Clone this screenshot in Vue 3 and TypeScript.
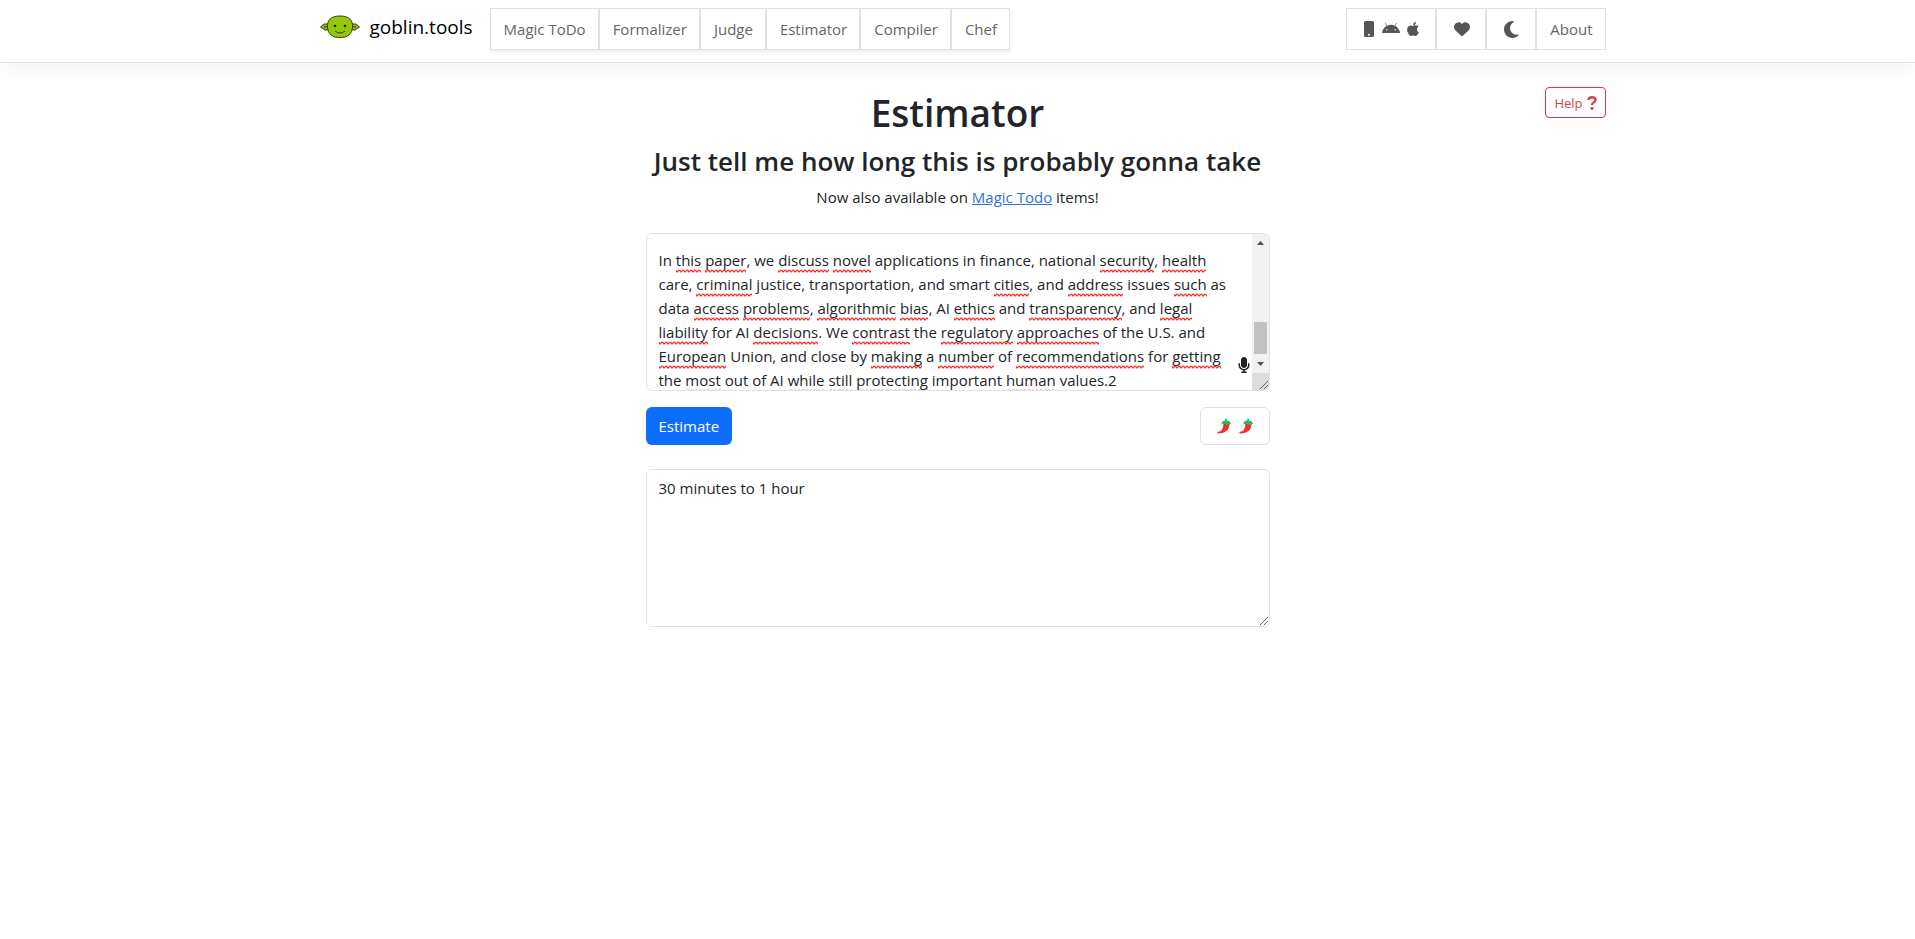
<script setup lang="ts">
import { ref } from 'vue'

type Piece = { text: string; flagged: boolean }

const tools = ['Magic ToDo', 'Formalizer', 'Judge', 'Estimator', 'Compiler', 'Chef']

// Words between asterisks are flagged by the spelling checker.
const marked = [
  'In *this* *paper*, we *discuss* *novel* applications in finance, national *security*, *health*',
  'care, *criminal* justice, transportation, and smart *cities*, and *address* issues *such* as',
  'data *access* *problems*, *algorithmic* *bias*, AI *ethics* and *transparency*, and *legal*',
  '*liability* for AI *decisions*. We *contrast* the *regulatory* *approaches* of the U.S. and',
  '*European* Union, and close by *making* a *number* of *recommendations* for *getting*',
  'the *most* out of AI *while* *still* *protecting* important *human* values.2',
]

const lines: Piece[][] = marked.map((line) =>
  line.split('*').map((text, i) => ({ text, flagged: i % 2 === 1 })),
)
const task = ref(marked.join('\n').replace(/\*/g, ''))
const estimate = ref('30 minutes to 1 hour')
</script>

<template>
  <header class="topbar">
    <div class="container bar">
      <a class="brand" href="#">
        <svg class="goblin" viewBox="0 0 40 24" aria-hidden="true">
          <path d="M9 9 L4 9 L0.500 12 L5 15 L9 15 Z M31 9 L36 9 L39.500 12 L35 15 L31 15 Z" fill="#8fbf0b" stroke="#333d12" stroke-width="1" />
          <path d="M4 12 L8 11.500 M36 12 L32 11.500" stroke="#333d12" />
          <path d="M20 1 C29 1 33 5 32.500 12 C32 19 28 22.500 20 22.500 C12 22.500 8 19 7.500 12 C7 5 11 1 20 1 Z" fill="#94c80b" stroke="#333d12" />
          <circle cx="15" cy="11" r="1.300" fill="#1e260b" />
          <circle cx="25" cy="11" r="1.300" fill="#1e260b" />
          <path d="M15 16 Q20 20 25 16" fill="none" stroke="#333d12" />
        </svg>
        <span>goblin.tools</span>
      </a>
      <nav class="group raised" aria-label="Tools">
        <a v-for="tool in tools" :key="tool" class="item" href="#">{{ tool }}</a>
      </nav>
      <nav class="group side" aria-label="Site">
        <a class="item icons" href="#" aria-label="Mobile apps">
          <svg class="phone" viewBox="0 0 384 512"><path fill-rule="evenodd" d="M80 0H304Q352 0 352 48V464Q352 512 304 512H80Q32 512 32 464V48Q32 0 80 0ZM192 408A32 32 0 1 0 192 472A32 32 0 1 0 192 408Z" /></svg>
          <svg class="android" viewBox="0 0 576 512"><path d="M420.55 301.93a24 24 0 1 1 24-24 24 24 0 0 1-24 24m-265.1 0a24 24 0 1 1 24-24 24 24 0 0 1-24 24m273.7-144.48 47.94-83a10 10 0 1 0-17.27-10l-48.54 84.07a301.25 301.25 0 0 0-246.56 0L116.18 64.45a10 10 0 1 0-17.27 10l47.94 83C64.53 202.22 8.24 285.55 0 384h576c-8.24-98.45-64.54-181.78-146.85-226.55" /></svg>
          <svg class="apple" viewBox="0 0 384 512"><path d="M318.7 268.7c-.2-36.7 16.4-64.4 50-84.8-18.8-26.9-47.2-41.7-84.7-44.6-35.5-2.8-74.3 20.7-88.5 20.7-15 0-49.4-19.7-76.4-19.7C63.3 141.2 4 184.8 4 273.5q0 39.3 14.400 81.200c12.800 36.700 59 126.700 107.200 125.200 25.200-.6 43-17.900 75.800-17.900 31.800 0 48.300 17.900 76.400 17.900 48.600-.7 90.400-82.500 102.600-119.300-65.200-30.700-61.700-90-61.700-91.900zm-56.600-164.200c27.300-32.400 24.800-61.900 24-72.500-24.100 1.400-52 16.400-67.900 34.900-17.500 19.800-27.800 44.300-25.600 71.900 26.100 2 49.900-11.400 69.500-34.300z" /></svg>
        </a>
        <a class="item glyph" href="#" aria-label="Support">
          <svg class="heart" viewBox="0 0 512 512"><path d="M47.6 300.4L228.3 469.1c7.5 7 17.4 10.9 27.7 10.9s20.2-3.9 27.7-10.9L464.4 300.4c30.4-28.3 47.6-68 47.6-109.5v-5.8c0-69.9-50.5-129.5-119.4-141C347 36.5 300.6 51.4 268 84L256 96 244 84c-32.6-32.6-79-47.500-124.600-39.900C50.500 55.600 0 115.200 0 185.100v5.800c0 41.500 17.200 81.200 47.600 109.500z" /></svg>
        </a>
        <button class="item glyph" type="button" aria-label="Dark mode">
          <svg class="moon" viewBox="0 32 384 448"><path d="M223.5 32C100 32 0 132.300 0 256S100 480 223.500 480c60.600 0 115.500-24.200 155.800-63.400c5-4.900 6.300-12.500 3.100-18.700s-10.100-9.700-17-8.500c-9.800 1.700-19.800 2.600-30.100 2.600c-96.900 0-175.500-78.800-175.500-176c0-65.800 36-123.100 89.300-153.300c6.100-3.500 9.200-10.500 7.700-17.300s-7.300-11.900-14.300-12.500c-6.300-.5-12.600-.8-19-.8z" /></svg>
        </button>
        <a class="item" href="#">About</a>
      </nav>
    </div>
  </header>

  <main class="container page">
    <button class="help" type="button">
      Help
      <svg viewBox="0 0 10 14" aria-hidden="true"><path d="M1.500 4 Q1.700 1.300 5 1.300 Q8.500 1.300 8.500 4 Q8.500 5.600 6.600 6.500 Q5 7.300 5 9" fill="none" stroke="currentColor" stroke-width="2.400" /><circle cx="5" cy="12.300" r="1.600" fill="currentColor" /></svg>
    </button>
    <div class="column">
      <h1>Estimator</h1>
      <h2>Just tell me how long this is probably gonna take</h2>
      <p>Now also available on <a href="#">Magic Todo</a> items!</p>

      <div class="editor">
        <textarea v-model="task" class="field task" aria-label="Task to estimate" wrap="off" spellcheck="false"></textarea>
        <div class="marks" aria-hidden="true">
          <div v-for="(line, i) in lines" :key="i"><span v-for="(piece, j) in line" :key="j" :class="{ flagged: piece.flagged }">{{ piece.text }}</span></div>
        </div>
        <button class="mic" type="button" aria-label="Dictate">
          <svg viewBox="0 0 384 512"><path d="M192 0C139 0 96 43 96 96V256c0 53 43 96 96 96s96-43 96-96V96c0-53-43-96-96-96zM64 216c0-13.300-10.700-24-24-24s-24 10.700-24 24v40c0 89.100 66.200 162.700 152 174.400V464H120c-13.300 0-24 10.700-24 24s10.700 24 24 24h72 72c13.300 0 24-10.700 24-24s-10.700-24-24-24H216V430.400c85.800-11.700 152-85.300 152-174.400V216c0-13.300-10.700-24-24-24s-24 10.700-24 24v40c0 70.700-57.300 128-128 128s-128-57.300-128-128V216z" /></svg>
        </button>
        <div class="scroll" aria-hidden="true">
          <svg class="arrow" viewBox="0 0 17 17"><path d="M5 11 L8.500 7 L12 11 Z" /></svg>
          <div class="track"><div class="thumb"></div></div>
          <svg class="arrow" viewBox="0 0 17 17"><path d="M5 6 L8.500 10 L12 6 Z" /></svg>
          <div class="corner"></div>
        </div>
        <svg class="grip" viewBox="0 0 10 10" aria-hidden="true"><path d="M1 9 L9 1 M5 9 L9 5" /></svg>
      </div>

      <div class="actions">
        <button class="primary" type="button">Estimate</button>
        <button class="spice" type="button" aria-label="Spiciness level 2">
          <svg v-for="n in 2" :key="n" viewBox="0 0 16 16"><path d="M13.500 5 Q14 15 2 15.500 Q1 15 1.500 14 Q7.500 13.500 7.500 5 Z" fill="#ef3328" /><path d="M5.500 6.500 Q5 3 9 2.800 L9.500 0.500 L11 1 L11 2.800 Q15 3 15 6 L12.500 5.500 L10.500 7 L8.500 5.500 Z" fill="#16c26b" /></svg>
        </button>
      </div>

      <div class="editor">
        <textarea v-model="estimate" class="field" aria-label="Estimate"></textarea>
        <svg class="grip" viewBox="0 0 10 10" aria-hidden="true"><path d="M1 9 L9 1 M5 9 L9 5" /></svg>
      </div>
    </div>
  </main>
</template>

<style>
body {
  margin: 0;
  background: #fff;
}
</style>

<style scoped>
.topbar,
.page {
  font-family: "Open Sans", "Noto Sans", sans-serif;
  font-size: 15px;
  line-height: 24px;
  color: #212529;
}
.topbar *,
.page * {
  box-sizing: border-box;
}
button,
textarea {
  font: inherit;
  color: inherit;
  margin: 0;
}
.container {
  box-sizing: border-box;
  max-width: 1320px;
  margin: 0 auto;
  padding: 0 12px;
}
.topbar {
  border-bottom: 1px solid #dee2e6;
  box-shadow: 0 8px 16px rgba(0, 0, 0, 0.04);
}
.bar {
  display: flex;
  align-items: center;
  padding-top: 8px;
  padding-bottom: 12px;
}
.brand {
  display: flex;
  align-items: center;
  gap: 10px;
  margin: 0 17px 4px 10px;
  color: #000;
  font-size: 19px;
  text-decoration: none;
}
.goblin {
  width: 40px;
  height: 24px;
}
.group {
  display: flex;
}
.raised {
  box-shadow: 0 2px 4px rgba(0, 0, 0, 0.08);
}
.side {
  margin-left: auto;
}
.item {
  display: flex;
  align-items: center;
  height: 42px;
  padding: 0 12px 0 13px;
  border: 1px solid #dee2e6;
  background: #fff;
  color: #666;
  text-decoration: none;
}
.item svg {
  height: 16px;
  fill: #555;
}
.item .moon {
  height: 17px;
}
.icons {
  gap: 7px;
  padding: 0 16px;
}
.glyph {
  justify-content: center;
  width: 50px;
}
.page {
  position: relative;
  padding-top: 26px;
}
.help {
  position: absolute;
  top: 24px;
  right: 12px;
  display: flex;
  align-items: center;
  gap: 4px;
  height: 31px;
  padding: 0 8px;
  border: 1px solid #dc3545;
  border-radius: 4px;
  background: #fff;
  color: #d04350;
  font-size: 13px;
}
.help svg {
  width: 10px;
  height: 14px;
}
.column {
  max-width: 624px;
  margin: 0 auto;
}
h1,
h2,
p {
  margin: 0;
  text-align: center;
  white-space: nowrap;
}
h1 {
  font-size: 37px;
  line-height: 48px;
  font-weight: 600;
}
h2 {
  margin: 8px 0;
  font-size: 26px;
  line-height: 32px;
  font-weight: 600;
}
p {
  margin-bottom: 24px;
}
p a {
  color: #2f6fe0;
}
.editor {
  position: relative;
  height: 158px;
}
.field {
  display: block;
  width: 100%;
  height: 100%;
  padding: 6px 12px;
  border: 1px solid #dee2e6;
  border-radius: 6px;
  outline: none;
  overflow: hidden;
  resize: none;
  background: #fff;
}
.task,
.marks {
  padding: 14px 12px 0;
}
.marks {
  position: absolute;
  inset: 1px;
  overflow: hidden;
  color: transparent;
  white-space: pre;
  pointer-events: none;
}
.flagged {
  padding-bottom: 3px;
  background: url("data:image/svg+xml,%3Csvg xmlns='http://www.w3.org/2000/svg' width='4' height='4'%3E%3Cpath d='M-1 0L1 3L3 1L5 3' fill='none' stroke='%23e33' stroke-width='1.2'/%3E%3C/svg%3E") left bottom repeat-x;
}
.mic {
  position: absolute;
  right: 20px;
  bottom: 18px;
  width: 12px;
  height: 16px;
  padding: 0;
  border: 0;
  background: none;
}
.mic svg {
  display: block;
  width: 12px;
  height: 16px;
  fill: #222;
}
.scroll {
  position: absolute;
  top: 1px;
  right: 1px;
  bottom: 1px;
  display: flex;
  flex-direction: column;
  width: 17px;
  overflow: hidden;
  border-radius: 0 5px 5px 0;
  background: #f1f1f1;
}
.arrow {
  width: 17px;
  height: 17px;
  fill: #505050;
}
.track {
  display: flex;
  flex: 1;
  flex-direction: column;
  justify-content: flex-end;
  padding: 0 2px 2px;
}
.thumb {
  height: 32px;
  background: #c1c1c1;
}
.corner {
  height: 17px;
  background: #dcdcdc;
}
.grip {
  position: absolute;
  right: 1px;
  bottom: 1px;
  width: 10px;
  height: 10px;
  fill: none;
  stroke: #666;
}
.actions {
  display: flex;
  justify-content: space-between;
  margin: 16px 0 24px;
}
.primary,
.spice {
  display: flex;
  align-items: center;
  height: 38px;
  padding: 0 13px;
  border: 0;
  border-radius: 6px;
}
.primary {
  background: #0d6efd;
  color: #fff;
}
.spice {
  gap: 6px;
  padding: 0 15px;
  border: 1px solid #dee2e6;
  background: #fff;
}
.spice svg {
  width: 16px;
  height: 16px;
}
</style>
